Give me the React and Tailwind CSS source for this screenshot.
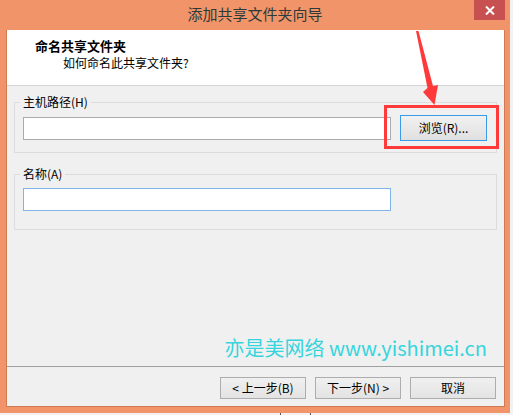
import React from "react";

const CJK = { fontFamily: '"Noto Sans CJK SC", "Noto Sans", sans-serif' };

// 向导底部按钮
function WizardButton({ children }) {
  return (
    <button className="w-[86px] h-[22px] border border-[#adadad] bg-gradient-to-b from-[#f0f0f0] to-[#e3e3e3] text-[12px] leading-[18px] text-black">
      {children}
    </button>
  );
}

export default function App() {
  return (
    <div
      className="relative w-[513px] h-[415px] bg-[#f2f2f2] overflow-hidden"
      style={CJK}
    >
      <div className="w-[510px] h-[413px] bg-[#f19469] flex flex-col">
        {/* 标题栏 */}
        <div className="h-[30px] flex items-start shrink-0">
          <div className="w-[36px]" />
          <div className="flex-1 text-center text-[15px] leading-[28px] text-[#2e3a3a]">
            添加共享文件夹向导
          </div>
          <div className="w-[31px] h-[20px] mr-[5px] bg-[#c75050] flex items-center justify-center">
            <svg width="10" height="9" viewBox="0 0 10 9">
              <path d="M1 0.5 L9 8.5 M9 0.5 L1 8.5" stroke="#fff" strokeWidth="2" />
            </svg>
          </div>
        </div>

        {/* 客户区 */}
        <div className="ml-[6px] w-[499px] h-[377px] border-x border-b border-[#cf7a52] bg-[#f0f0f0] flex flex-col">
          {/* 头部说明 */}
          <div className="h-[56px] bg-white border-b border-[#d5d5d5] pt-[7px] shrink-0">
            <div className="pl-[28px] text-[13px] leading-[18px] font-bold text-black">
              命名共享文件夹
            </div>
            <div className="pl-[56px] text-[12px] leading-[16px] text-black">
              如何命名此共享文件夹?
            </div>
          </div>

          <div className="px-[7px]">
            {/* 主机路径 */}
            <fieldset className="mt-[8px] border border-[#dcdcdc] px-[8px] pb-[11px]">
              <legend className="px-[3px] -ml-[3px] text-[12px] leading-[16px] text-black">
                主机路径(H)
              </legend>
              <div className="relative mt-[5px] flex items-center">
                <div className="w-[368px] h-[23px] border border-[#ababab] bg-white" />
                <button className="ml-[9px] w-[87px] h-[26px] border border-[#3c9be8] bg-gradient-to-b from-[#f1f1f1] to-[#e0e0e0] text-[12px] leading-[18px] text-black">
                  浏览(R)...
                </button>
                {/* 红色标注框 */}
                <div className="absolute left-[361px] top-[-10px] w-[115px] h-[44px] border-[3px] border-[#ff3a3a] pointer-events-none" />
              </div>
            </fieldset>

            {/* 名称 */}
            <fieldset className="mt-[13px] border border-[#dcdcdc] px-[8px] pb-[18px]">
              <legend className="px-[3px] -ml-[3px] text-[12px] leading-[16px] text-black">
                名称(A)
              </legend>
              <div className="mt-[6px] w-[368px] h-[23px] border border-[#7eb4ea] bg-white" />
            </fieldset>
          </div>

          {/* 水印 */}
          <div className="flex-1 flex items-end justify-end pr-[17px] pb-[6px]">
            <div className="text-[20px] leading-[24px] text-[#36d5dd] whitespace-nowrap">
              亦是美网络 www.yishimei.cn
            </div>
          </div>

          {/* 底部按钮 */}
          <div className="border-t border-[#a0a0a0] pt-[10px] pb-[7px] pr-[8px] flex justify-end gap-[9px] shrink-0">
            <WizardButton>&lt; 上一步(B)</WizardButton>
            <WizardButton>下一步(N) &gt;</WizardButton>
            <WizardButton>取消</WizardButton>
          </div>
        </div>
      </div>

      {/* 底部残留的任务栏边线 */}
      <div className="absolute left-[280px] top-[413px] w-px h-[2px] bg-[#555]" />
      <div className="absolute left-[310px] top-[413px] w-px h-[2px] bg-[#555]" />

      {/* 红色箭头 */}
      <svg
        className="absolute left-0 top-0 pointer-events-none"
        width="513"
        height="415"
        viewBox="0 0 513 415"
      >
        <polygon
          points="416,31 418.5,31 433,86 438,85 434.5,105 423,92 427.5,88"
          fill="#ff3a3a"
        />
      </svg>
    </div>
  );
}
